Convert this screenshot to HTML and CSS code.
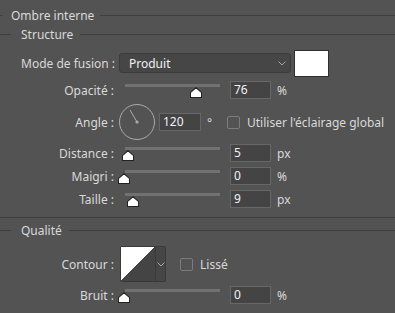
FILE: index.html
```html
<!DOCTYPE html>
<html lang="fr">

<head>
    <meta charset="UTF-8">
    <title>Ombre interne</title>
    <link rel="stylesheet" href="styles.css">
</head>

<body>
    <div class="panel">
        <div class="legend legend-top">
            <span class="lead"></span><span class="legend-text">Ombre interne</span><span class="rule"></span>
        </div>
        <div class="legend legend-sub">
            <span class="lead"></span><span class="legend-text">Structure</span><span class="rule"></span>
        </div>

        <div class="row row-mode">
            <span class="label">Mode de fusion :</span>
            <div class="select">
                <span>Produit</span>
                <svg class="chevron" width="8" height="5" viewBox="0 0 8 5"><polyline points="0.5,0.5 4,4 7.5,0.5" /></svg>
            </div>
            <div class="swatch"></div>
        </div>

        <div class="row row-opacity">
            <span class="label">Opacité :</span>
            <div class="slider"><span class="thumb" style="left: 72px"></span></div>
            <div class="field">76</div>
            <span class="unit">%</span>
        </div>

        <div class="row row-angle">
            <span class="label">Angle :</span>
            <svg class="dial" width="36" height="36" viewBox="0 0 36 36">
                <circle cx="18" cy="18" r="17.5" />
                <line x1="18" y1="18" x2="11" y2="5.9" />
                <circle class="dot" cx="18" cy="18" r="1.6" />
            </svg>
            <div class="field field-angle">120</div>
            <span class="degree">°</span>
            <span class="check"></span>
            <span class="check-label">Utiliser l'éclairage global</span>
        </div>

        <div class="row row-distance">
            <span class="label">Distance :</span>
            <div class="slider"><span class="thumb" style="left: 4px"></span></div>
            <div class="field">5</div>
            <span class="unit">px</span>
        </div>

        <div class="row row-choke">
            <span class="label">Maigri :</span>
            <div class="slider"><span class="thumb" style="left: 0px"></span></div>
            <div class="field">0</div>
            <span class="unit">%</span>
        </div>

        <div class="row row-size">
            <span class="label">Taille :</span>
            <div class="slider"><span class="thumb" style="left: 9px"></span></div>
            <div class="field">9</div>
            <span class="unit">px</span>
        </div>

        <div class="separator"></div>

        <div class="legend legend-quality">
            <span class="lead"></span><span class="legend-text">Qualité</span><span class="rule"></span>
        </div>

        <div class="row row-contour">
            <span class="label">Contour :</span>
            <div class="contour">
                <div class="contour-preview"></div>
                <div class="contour-arrow">
                    <svg class="chevron" width="8" height="5" viewBox="0 0 8 5"><polyline points="0.5,0.5 4,4 7.5,0.5" /></svg>
                </div>
            </div>
            <span class="check check-smooth"></span>
            <span class="check-label">Lissé</span>
        </div>

        <div class="row row-noise">
            <span class="label">Bruit :</span>
            <div class="slider"><span class="thumb" style="left: 0px"></span></div>
            <div class="field">0</div>
            <span class="unit">%</span>
        </div>
    </div>
</body>

</html>
```

FILE: styles.css
```css
body {
    margin: 0;
    background: #535353;
    font-family: 'Noto Sans', 'Open Sans', sans-serif;
    font-size: 12px;
    color: #d9d9d9;
}

.panel {
    width: 395px;
    height: 313px;
    overflow: hidden;
}

/* section titles with a rule on each side */
.legend {
    display: flex;
    align-items: center;
    height: 18px;
}

.legend-top {
    margin-top: 6px;
}

.legend-sub {
    margin-top: 1px;
}

.legend-quality {
    margin-top: 3px;
}

.lead,
.rule {
    height: 1px;
    background: #3f3f3f;
}

.rule {
    flex: 1;
}

.legend-top .lead {
    width: 3px;
}

.legend-top .legend-text {
    padding: 0 6px 0 8px;
}

.legend-sub .lead,
.legend-quality .lead {
    width: 11px;
}

.legend-sub .legend-text,
.legend-quality .legend-text {
    padding: 0 7px 0 10px;
}

.separator {
    height: 1px;
    margin-top: 9px;
    background: #3f3f3f;
}

/* rows */
.row {
    display: flex;
    align-items: center;
    height: 18px;
    white-space: nowrap;
}

.label {
    flex-shrink: 0;
    width: 93px;
    padding-left: 21px;
    text-align: right;
}

.row-mode {
    height: 20px;
    margin-top: 10px;
}

.row-opacity {
    margin-top: 8px;
}

.row-angle {
    height: 36px;
    margin-top: 5px;
}

.row-distance {
    margin-top: 4px;
}

.row-choke,
.row-size {
    margin-top: 5px;
}

.row-contour {
    height: 36px;
    margin-top: 7px;
}

.row-noise {
    margin-top: 4px;
}

/* dropdown */
.select {
    box-sizing: border-box;
    display: flex;
    align-items: center;
    justify-content: space-between;
    width: 172px;
    height: 20px;
    margin-left: 5px;
    padding: 0 4px 0 9px;
    border: 1px solid #3b3b3b;
    border-radius: 3px;
    background: #464646;
    color: #f0f0f0;
}

.chevron polyline {
    fill: none;
    stroke: #a8a8a8;
    stroke-width: 1;
}

.swatch {
    box-sizing: border-box;
    flex-shrink: 0;
    width: 35px;
    height: 27px;
    margin-left: 3px;
    border: 1px solid #2f2f2f;
    background: #fff;
}

/* sliders */
.slider {
    position: relative;
    flex-shrink: 0;
    width: 96px;
    height: 18px;
    margin-left: 10px;
}

.slider::before {
    content: "";
    position: absolute;
    left: 1px;
    right: 0;
    top: 3px;
    height: 3px;
    background: #717171;
}

.thumb {
    position: absolute;
    top: 6px;
    width: 12px;
    height: 11px;
    margin-left: -6px;
    background: #222;
    clip-path: polygon(50% 0, 100% 50%, 100% 100%, 0 100%, 0 50%);
}

.thumb::after {
    content: "";
    position: absolute;
    left: 1px;
    top: 1.5px;
    right: 1px;
    bottom: 1px;
    background: #fff;
    clip-path: polygon(50% 0, 100% 50%, 100% 100%, 0 100%, 0 50%);
}

/* number fields */
.field {
    box-sizing: border-box;
    flex-shrink: 0;
    width: 41px;
    height: 18px;
    margin-left: 10px;
    padding-left: 3px;
    border: 1px solid #676767;
    background: #444;
    color: #f2f2f2;
    line-height: 16px;
}

.unit {
    margin-left: 6px;
}

/* angle */
.dial {
    flex-shrink: 0;
    margin-left: 5px;
}

.dial circle {
    fill: none;
    stroke: #ababab;
    stroke-width: 1;
}

.dial line {
    stroke: #ababab;
    stroke-width: 1;
}

.dial .dot {
    fill: #ababab;
    stroke: none;
}

.field-angle {
    width: 42px;
    margin-left: 4px;
}

.degree {
    width: 20px;
    margin-left: 6px;
}

.check {
    box-sizing: border-box;
    flex-shrink: 0;
    width: 13px;
    height: 13px;
    border: 1px solid #7c7c7c;
    border-radius: 2px;
}

.check-label {
    margin-left: 7px;
}

/* contour picker */
.contour {
    box-sizing: border-box;
    display: flex;
    flex-shrink: 0;
    width: 46px;
    height: 36px;
    margin-left: 6px;
    border: 1px solid #3a3a3a;
    border-radius: 2px;
    background: #464646;
}

.contour-preview {
    width: 34px;
    background: linear-gradient(to bottom right, #fff 50%, #444 50%);
}

.contour-arrow {
    display: flex;
    align-items: center;
    justify-content: center;
    flex: 1;
    border-left: 1px solid #3a3a3a;
}

.check-smooth {
    margin-left: 14px;
}
```
